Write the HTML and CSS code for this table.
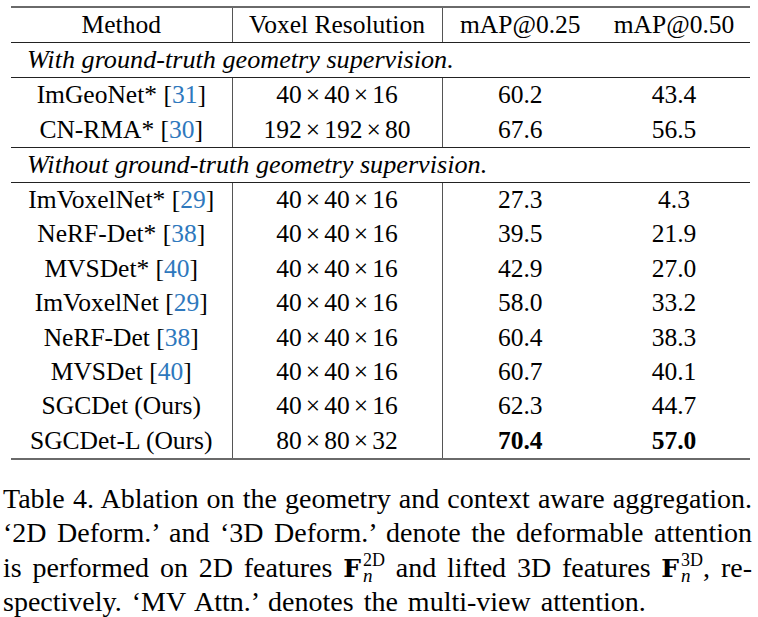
FILE: index.html
```html
<!DOCTYPE html>
<html>
<head>
<meta charset="utf-8">
<link rel="stylesheet" href="styles.css">
</head>
<body>
<div class="page">
  <table class="results">
    <colgroup>
      <col class="c1"><col class="c2"><col class="c3"><col class="c4">
    </colgroup>
    <thead>
      <tr class="head">
        <th class="vl">Method</th>
        <th class="vl">Voxel Resolution</th>
        <th>mAP@0.25</th>
        <th>mAP@0.50</th>
      </tr>
    </thead>
    <tbody>
      <tr class="group"><td colspan="4">With ground-truth geometry supervision.</td></tr>
      <tr class="row"><td class="vl">ImGeoNet* [<span class="ref">31</span>]</td><td class="vl">40<span class="x">×</span>40<span class="x">×</span>16</td><td>60.2</td><td>43.4</td></tr>
      <tr class="row last"><td class="vl">CN-RMA* [<span class="ref">30</span>]</td><td class="vl">192<span class="x">×</span>192<span class="x">×</span>80</td><td>67.6</td><td>56.5</td></tr>
      <tr class="group"><td colspan="4">Without ground-truth geometry supervision.</td></tr>
      <tr class="row"><td class="vl">ImVoxelNet* [<span class="ref">29</span>]</td><td class="vl">40<span class="x">×</span>40<span class="x">×</span>16</td><td>27.3</td><td>4.3</td></tr>
      <tr class="row"><td class="vl">NeRF-Det* [<span class="ref">38</span>]</td><td class="vl">40<span class="x">×</span>40<span class="x">×</span>16</td><td>39.5</td><td>21.9</td></tr>
      <tr class="row"><td class="vl">MVSDet* [<span class="ref">40</span>]</td><td class="vl">40<span class="x">×</span>40<span class="x">×</span>16</td><td>42.9</td><td>27.0</td></tr>
      <tr class="row"><td class="vl">ImVoxelNet [<span class="ref">29</span>]</td><td class="vl">40<span class="x">×</span>40<span class="x">×</span>16</td><td>58.0</td><td>33.2</td></tr>
      <tr class="row"><td class="vl">NeRF-Det [<span class="ref">38</span>]</td><td class="vl">40<span class="x">×</span>40<span class="x">×</span>16</td><td>60.4</td><td>38.3</td></tr>
      <tr class="row"><td class="vl">MVSDet [<span class="ref">40</span>]</td><td class="vl">40<span class="x">×</span>40<span class="x">×</span>16</td><td>60.7</td><td>40.1</td></tr>
      <tr class="row"><td class="vl">SGCDet (Ours)</td><td class="vl">40<span class="x">×</span>40<span class="x">×</span>16</td><td>62.3</td><td>44.7</td></tr>
      <tr class="row end"><td class="vl">SGCDet-L (Ours)</td><td class="vl">80<span class="x">×</span>80<span class="x">×</span>32</td><td class="best">70.4</td><td class="best">57.0</td></tr>
    </tbody>
  </table>

  <div class="caption">
    <span class="line">Table 4. Ablation on the geometry and context aware aggregation.</span>
    <span class="line">‘2D Deform.’ and ‘3D Deform.’ denote the deformable attention</span>
    <span class="line">is performed on 2D features <span class="math"><b class="mf">F</b><span class="subsup"><span class="sup">2D</span><span class="sub">n</span></span></span> and lifted 3D features <span class="math"><b class="mf">F</b><span class="subsup"><span class="sup">3D</span><span class="sub">n</span></span></span>, re-</span>
    <span class="line lastline">spectively. ‘MV Attn.’ denotes the multi-view attention.</span>
  </div>
</div>
</body>
</html>
```

FILE: styles.css
```css
html, body {
  margin: 0;
  padding: 0;
  background: #ffffff;
}

.page {
  width: 758px;
  font-family: "Liberation Serif", "Times New Roman", serif;
  color: #000;
}

.results {
  margin: 6px 0 0 11px;
  width: 739px;
  border-collapse: collapse;
  table-layout: fixed;
  font-size: 25.5px;
  border-top: 2px solid #6a6a6a;
  border-bottom: 2px solid #6a6a6a;
}

.c1 { width: 221px; }
.c2 { width: 210px; }
.c3 { width: 156px; }
.c4 { width: 152px; }

.results th,
.results td {
  padding: 0;
  text-align: center;
  font-weight: normal;
  white-space: nowrap;
}

.results .vl {
  border-right: 1px solid #555;
}

.head th {
  height: 34px;
  border-bottom: 1px solid #222;
}

.results .group td {
  height: 34px;
  text-align: left;
  padding-left: 16px;
  font-style: italic;
  font-size: 26.2px;
  border-bottom: 1px solid #222;
}

.row td {
  height: 34.4px;
}

.row.last td {
  border-bottom: 1px solid #222;
}

.x {
  margin: 0 4px;
}

.ref {
  color: #2e78bd;
}

.results td.best {
  font-weight: bold;
}

.caption {
  margin: 22px 0 0 3px;
  width: 749px;
  font-size: 28px;
  line-height: 34.5px;
}

.caption .line {
  display: block;
  height: 34.5px;
  text-align: justify;
  text-align-last: justify;
  white-space: nowrap;
}

.caption .line.lastline {
  text-align-last: left;
  word-spacing: 3px;
}

.math {
  white-space: nowrap;
}

.mf {
  font-family: "DejaVu Serif", serif;
  font-weight: bold;
  font-size: 25px;
}

.subsup {
  display: inline-flex;
  flex-direction: column;
  vertical-align: 11px;
  margin-left: 2px;
}

.sup {
  font-size: 18px;
  line-height: 15px;
}

.sub {
  font-size: 19px;
  line-height: 15px;
  font-style: italic;
}
```
